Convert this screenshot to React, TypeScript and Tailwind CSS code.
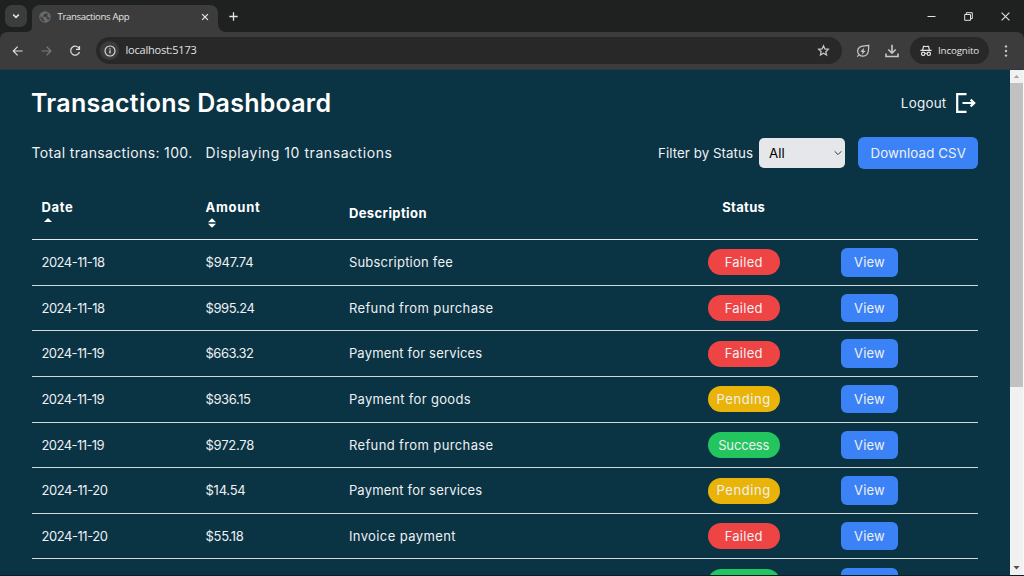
import type { ReactNode } from "react";

type Status = "Failed" | "Pending" | "Success";

interface Transaction {
  date: string;
  dateClass: string;
  amount: string;
  amountClass: string;
  description: string;
  descriptionClass: string;
  status: Status;
}

const transactions: Transaction[] = [
  { date: "2024-11-18", dateClass: "tracking-[-0.51px]", amount: "$947.74", amountClass: "tracking-[-0.16px]", description: "Subscription fee", descriptionClass: "tracking-[0.22px]", status: "Failed" },
  { date: "2024-11-18", dateClass: "tracking-[-0.51px]", amount: "$995.24", amountClass: "tracking-[-0.41px]", description: "Refund from purchase", descriptionClass: "tracking-[0.38px]", status: "Failed" },
  { date: "2024-11-19", dateClass: "tracking-[-0.56px]", amount: "$663.32", amountClass: "tracking-[-0.51px]", description: "Payment for services", descriptionClass: "tracking-[0.18px]", status: "Failed" },
  { date: "2024-11-19", dateClass: "tracking-[-0.56px]", amount: "$936.15", amountClass: "tracking-[-0.41px]", description: "Payment for goods", descriptionClass: "tracking-[0.33px]", status: "Pending" },
  { date: "2024-11-19", dateClass: "tracking-[-0.56px]", amount: "$972.78", amountClass: "tracking-[-0.24px]", description: "Refund from purchase", descriptionClass: "tracking-[0.38px]", status: "Success" },
  { date: "2024-11-20", dateClass: "tracking-[-0.45px]", amount: "$14.54", amountClass: "tracking-[-0.24px]", description: "Payment for services", descriptionClass: "tracking-[0.18px]", status: "Pending" },
  { date: "2024-11-20", dateClass: "tracking-[-0.45px]", amount: "$55.18", amountClass: "tracking-[-0.29px]", description: "Invoice payment", descriptionClass: "tracking-[0.4px]", status: "Failed" },
];

const statusClass: Record<Status, string> = {
  Failed: "bg-[#ef4444] tracking-[0.25px]",
  Pending: "bg-[#eab308] tracking-[0.6px]",
  Success: "bg-[#22c55e] tracking-[-0.17px]",
};

const gridClass = "grid grid-cols-[164px_143.4px_358.8px_133.3px_1fr]";

function Icon({ children, className, box = "0 0 16 16" }: { children: ReactNode; className: string; box?: string }) {
  return (
    <svg viewBox={box} className={className} fill="none" stroke="currentColor">
      {children}
    </svg>
  );
}

function TabStrip() {
  return (
    <div className="flex h-8 shrink-0 items-start bg-[#1f2020] text-[#e3e3e3]">
      <div className="mt-[5px] ml-[5px] flex h-[22px] w-[22px] items-center justify-center rounded-[7px] bg-[#3c3c3c]">
        <Icon className="h-[8px] w-[8px]" box="0 0 8 8">
          <path d="M1.2 2.6 4 5.4l2.8-2.8" strokeWidth="1.5" />
        </Icon>
      </div>
      <div className="mt-[26px] h-[6px] w-[5px] bg-[#3c3c3c]">
        <div className="h-full w-full rounded-br-[6px] bg-[#1f2020]" />
      </div>
      <div className="mt-[5px] flex h-[27px] w-[186px] items-center rounded-t-[8px] bg-[#3c3c3c] pb-[4px] pl-[7px]">
        <Icon className="h-[12px] w-[12px] shrink-0" box="0 0 12 12">
          <circle cx="6" cy="6" r="5.2" fill="#3c3c3c" stroke="#686c71" strokeWidth="1.2" />
          <path d="M1 5C1.6 2.6 3.4.9 6 .9h1.6v1.3L6.2 3.1H4.9v1.3H3.7v1.3h3l1 .9v1.5l1.4.3.8 1.2C8.7 11 7.4 11.4 6 11.4V9.9L4.5 8.7V7.6L1 5ZM8.8 1.8l1.8 2.2.5 1.8-1.6.6-1.2-1V3.6Z" fill="#686c71" stroke="none" />
        </Icon>
        <span className="ml-[6.5px] pt-px font-['Open_Sans','Noto_Sans',sans-serif] text-[9.6px] tracking-[-0.35px] whitespace-nowrap">Transactions App</span>
        <Icon className="mr-[9px] ml-auto h-[8px] w-[8px]" box="0 0 8 8">
          <path d="m1.1 1.1 5.8 5.8M6.9 1.1 1.1 6.9" strokeWidth="1.3" />
        </Icon>
      </div>
      <div className="mt-[24px] h-[8px] w-[8px] bg-[#3c3c3c]">
        <div className="h-full w-full rounded-bl-[8px] bg-[#1f2020]" />
      </div>
      <Icon className="mt-[11.5px] ml-[3px] h-[9px] w-[9px]" box="0 0 9 9">
        <path d="M4.5.3v8.4M.3 4.5h8.4" strokeWidth="1.3" />
      </Icon>
      <div className="mt-[11.5px] mr-[14px] ml-auto flex items-center gap-[28px]">
        <Icon className="h-[9px] w-[9px]" box="0 0 9 9">
          <path d="M.5 4.5h8" />
        </Icon>
        <Icon className="h-[9px] w-[9px]" box="0 0 9 9">
          <path d="M.7 2.5h5.8v5.8H.7ZM2.3 2.5V.7h6v5.9H6.6" />
        </Icon>
        <Icon className="h-[9px] w-[9px]" box="0 0 9 9">
          <path d="m.6.6 7.8 7.8M8.4.6.6 8.4" strokeWidth="1.1" />
        </Icon>
      </div>
    </div>
  );
}

function Toolbar() {
  return (
    <div className="bg-[#1f2020]">
      <div className="flex h-[38px] items-center rounded-t-[7px] border-b border-[#2b3a40] bg-[#3c3c3c] text-[#c7c7c7]">
        <Icon className="ml-[12px] h-[12px] w-[12px] text-[#dedede]" box="0 0 12 12">
          <path d="M10.6 6H1.4M5.6 1.7 1.3 6l4.3 4.3" strokeWidth="1.2" />
        </Icon>
        <Icon className="ml-[17px] h-[12px] w-[12px] text-[#7d7d7d]" box="0 0 12 12">
          <path d="M.6 6h9.2M5.6 1.7 9.9 6l-4.3 4.3" strokeWidth="1.2" />
        </Icon>
        <Icon className="ml-[16px] h-[12px] w-[12px] text-[#dedede]" box="0 0 12 12">
          <path d="M10.3 3.8A4.5 4.5 0 1 0 10.5 7M10.5.9v3.4H7" strokeWidth="1.2" />
        </Icon>
        <div className="ml-[15px] flex h-[27px] w-[746px] items-center rounded-full bg-[#282828] pl-[4px]">
          <div className="flex h-[19px] w-[19px] items-center justify-center rounded-full bg-[#3c3c3c]">
            <Icon className="h-[12px] w-[12px] text-[#e3e3e3]" box="0 0 12 12">
              <circle cx="6" cy="6" r="5" strokeWidth="1.1" />
              <path d="M6 5.3v3.2M6 3.2v1.2" strokeWidth="1.2" />
            </Icon>
          </div>
          <span className="ml-[6.5px] font-['Open_Sans','Noto_Sans',sans-serif] text-[11px] tracking-[-0.22px] text-[#e3e3e3]">localhost:5173</span>
          <Icon className="mr-[12.5px] ml-auto h-[13px] w-[13px]" box="0 0 13 13">
            <path d="m6.5 1.7 1.4 3.2 3.5.4-2.6 2.4.8 3.4-3.1-1.8-3.1 1.8.8-3.4-2.6-2.4 3.5-.4Z" strokeWidth="1.2" />
          </Icon>
        </div>
        <Icon className="ml-[14px] h-[14px] w-[14px]" box="0 0 14 14">
          <path d="M1.2 12.6 3.3 10.6M3.3 10.8C.8 8.4 1.2 5.2 3.6 3.3 5.6 1.7 9 2.3 12.7 1.4 12.5 4.6 13 8.3 11 10.4 8.9 12.6 5.4 12.8 3.3 10.8Z" strokeWidth="1.25" />
          <path d="M8.2 3.7 4.4 7.4l2.2.5-.9 2.8 3.9-3.8-2.2-.5Z" fill="currentColor" stroke="none" />
        </Icon>
        <Icon className="ml-[15px] h-[14px] w-[14px]" box="0 0 14 14">
          <path d="M7 .8v8M3.3 5.5 7 9.2l3.7-3.7M1 9.6v2.9h12V9.6" strokeWidth="1.6" />
        </Icon>
        <div className="ml-[11px] flex h-[27px] w-[79px] items-center rounded-full bg-[#282828] pl-[10px] text-[#e3e3e3]">
          <Icon className="h-[12px] w-[12px] shrink-0" box="0 0 12 12">
            <path d="M.4 5.4h11.2M2.6 5.2 3.5 1.3h1.2L6 1.7l1.3-.4h1.2l.9 3.9" strokeWidth="1.2" />
            <circle cx="3.2" cy="8.8" r="1.7" strokeWidth="1.2" />
            <circle cx="8.8" cy="8.8" r="1.7" strokeWidth="1.2" />
            <path d="M4.8 8.5q1.2-.6 2.4 0" />
          </Icon>
          <span className="ml-[6px] pt-px font-['Open_Sans','Noto_Sans',sans-serif] text-[9.8px] tracking-[-0.16px]">Incognito</span>
        </div>
        <svg viewBox="0 0 4 12" className="ml-[15px] h-[12px] w-[4px]" fill="currentColor">
          <circle cx="2" cy="1.4" r="1.2" />
          <circle cx="2" cy="6" r="1.2" />
          <circle cx="2" cy="10.6" r="1.2" />
        </svg>
      </div>
    </div>
  );
}

function Scrollbar() {
  return (
    <div className="flex w-[14px] shrink-0 flex-col border-r border-[#fafafa] bg-[#f1f1f1]">
      <div className="flex h-[13px] items-center justify-center">
        <svg viewBox="0 0 7 4" className="h-[3.5px] w-[7px] fill-[#a3a3a3]">
          <path d="M0 4 3.5 0 7 4Z" />
        </svg>
      </div>
      <div className="h-[304px] bg-[#c1c1c1]" />
      <div className="mt-auto flex h-[14px] items-center justify-center">
        <svg viewBox="0 0 7 4" className="h-[3.5px] w-[7px] fill-[#505050]">
          <path d="M0 0 3.5 4 7 0Z" />
        </svg>
      </div>
    </div>
  );
}

export default function App() {
  return (
    <div className="flex h-[576px] w-[1024px] flex-col overflow-hidden bg-[#0a3344]">
      <TabStrip />
      <Toolbar />
      <div className="flex min-h-0 flex-1 border-b border-[#061f2a]">
        <main className="min-w-0 flex-1 overflow-hidden pt-[16px] pr-[32px] pl-[32px] font-['Inter','Liberation_Sans',sans-serif] text-[13px] text-[#eef1f3]">
          <header className="flex h-[36px] items-center justify-between">
            <h1 className="-ml-px text-[25px] font-semibold tracking-[0.25px] text-white">Transactions Dashboard</h1>
            <button className="flex items-center gap-[9px] pr-[2.5px] pb-[2px] text-[13.4px]">
              <span className="tracking-[0.25px]">Logout</span>
              <Icon className="h-[20px] w-[20px] text-white" box="0 0 20 20">
                <path d="M10.5 1.2H1.2v17.6h9.3M6.5 10H18M14.6 6.6 18.2 10l-3.6 3.4" strokeWidth="2.2" />
              </Icon>
            </button>
          </header>
          <section className="mt-[14px] flex h-[34px] items-center">
            <span className="-ml-[0.5px] pb-[2px] text-[14px] tracking-[0.36px]">Total transactions: 100.</span>
            <span className="ml-[13px] pb-[2px] text-[14px] tracking-[0.56px]">Displaying 10 transactions</span>
            <label className="ml-auto pt-px text-[13.3px] tracking-[0.06px]">Filter by Status</label>
            <div className="ml-[6px] flex h-[30px] w-[86px] items-center justify-between rounded-[5px] bg-[#e5e7eb] pr-[3px] pl-[10px] text-[13.3px] text-black">
              <span className="pt-px">All</span>
              <Icon className="h-[8px] w-[8px] text-[#333]" box="0 0 8 8">
                <path d="M.7 2.3 4 5.6l3.3-3.3" />
              </Icon>
            </div>
            <button className="ml-[12.5px] h-[32px] w-[120.5px] rounded-[6px] bg-[#3b82f6] pt-px pl-px text-[13.3px] tracking-[0.12px]">Download CSV</button>
          </section>

          <div className="mt-[16px]">
            <div className={`${gridClass} h-[54px] border-b border-[#e5e7eb] text-[13px] leading-[19px] font-bold text-white`}>
              <div className="px-[9.5px] pt-[12px]">
                <div className="tracking-[0.67px]">Date</div>
                <svg viewBox="0 0 8 4" className="mt-px ml-[2px] h-[4px] w-[8px] fill-current">
                  <path d="M0 4 4 0l4 4Z" />
                </svg>
              </div>
              <div className="px-[9.5px] pt-[12px]">
                <div className="tracking-[0.75px]">Amount</div>
                <svg viewBox="0 0 8 10" className="mt-px ml-[2px] h-[10px] w-[8px] fill-current">
                  <path d="M0 4.3 4 .2l4 4.1ZM0 5.7l4 4.1 4-4.1Z" />
                </svg>
              </div>
              <div className="px-[9.5px] pt-[18px] tracking-[0.41px]">Description</div>
              <div className="px-[9.5px] pt-[12px]">
                <div className="w-[72px] text-center tracking-[0.33px]">Status</div>
              </div>
            </div>
            {transactions.map((t, i) => (
              <div key={i} className={`${gridClass} h-[45.65px] items-center border-b border-[#d0d8dc]`}>
                <div className={`px-[9.5px] pt-px ${t.dateClass}`}>{t.date}</div>
                <div className={`px-[9.5px] pt-px ${t.amountClass}`}>{t.amount}</div>
                <div className={`px-[9.5px] pt-px ${t.descriptionClass}`}>{t.description}</div>
                <div className="px-[9.5px]">
                  <div className={`flex h-[26px] w-[72px] items-center justify-center rounded-full pt-px ${statusClass[t.status]}`}>{t.status}</div>
                </div>
                <div className="px-[9.5px]">
                  <button className="block h-[28.5px] w-[57px] rounded-[6px] bg-[#3b82f6] pt-px tracking-[0.22px]">View</button>
                </div>
              </div>
            ))}
            <div className={`${gridClass} h-[45.65px] items-center`}>
              <div className="col-start-4 px-[9.5px]">
                <div className="h-[26px] w-[72px] rounded-full bg-[#22c55e]" />
              </div>
              <div className="px-[9.5px]">
                <div className="h-[28.5px] w-[57px] rounded-[6px] bg-[#3b82f6]" />
              </div>
            </div>
          </div>
        </main>
        <Scrollbar />
      </div>
    </div>
  );
}
